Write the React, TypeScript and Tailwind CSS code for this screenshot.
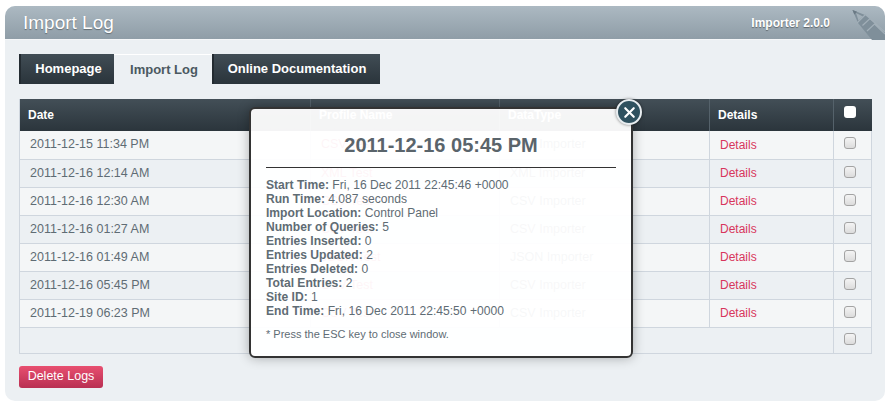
import { X } from "lucide-react";

const rows = [
  { date: "2011-12-15 11:34 PM", profile: "CSV Test", type: "CSV Importer" },
  { date: "2011-12-16 12:14 AM", profile: "XML Test", type: "XML Importer" },
  { date: "2011-12-16 12:30 AM", profile: "CSV Test", type: "CSV Importer" },
  { date: "2011-12-16 01:27 AM", profile: "CSV Test", type: "CSV Importer" },
  { date: "2011-12-16 01:49 AM", profile: "JSON Test", type: "JSON Importer" },
  { date: "2011-12-16 05:45 PM", profile: "CSV Test", type: "CSV Importer" },
  { date: "2011-12-19 06:23 PM", profile: "CSV Test", type: "CSV Importer" },
];

const stats = [
  ["Start Time:", "Fri, 16 Dec 2011 22:45:46 +0000"],
  ["Run Time:", "4.087 seconds"],
  ["Import Location:", "Control Panel"],
  ["Number of Queries:", "5"],
  ["Entries Inserted:", "0"],
  ["Entries Updated:", "2"],
  ["Entries Deleted:", "0"],
  ["Total Entries:", "2"],
  ["Site ID:", "1"],
  ["End Time:", "Fri, 16 Dec 2011 22:45:50 +0000"],
];

function Checkbox({ dark }: { dark?: boolean }) {
  return (
    <span
      className={`ml-[10px] block h-[12px] w-[12px] rounded-[3px] ${
        dark
          ? "-mt-[6px] bg-white"
          : "-mt-[3px] border border-[#a3a3a3] bg-gradient-to-b from-[#f4f4f4] to-[#dcdcdc]"
      }`}
    />
  );
}

function PencilMark() {
  return (
    <svg viewBox="0 0 36 34" className="absolute right-0 top-0 h-[34px] w-[36px]">
      <polygon points="3.5,4 16,9 36,26 36,34 23,34 9,17" fill="#7f8f9a" />
      <polygon points="7,7 14,10.5 9.5,14.5" fill="#a2afb8" />
      <path d="M8 17 L17 8 M13.5 19.5 L21 12.5 L36 26 M18 25 L25.5 18 L36 28" fill="none" stroke="#a2afb8" strokeWidth="1.2" />
      <polygon points="3.5,4 8,5.8 5.3,8.6" fill="#6a7984" />
    </svg>
  );
}

export default function App() {
  const thClass =
    "h-[32px] border-r border-[#55626b] pl-[8px] text-left text-[12px] font-bold text-white";
  const tdClass = "h-[28px] border-b border-r border-[#cfd6de] px-[10px]";

  return (
    <div className="relative h-[413px] w-[896px] overflow-hidden bg-white font-['Liberation_Sans',Arial,sans-serif] text-[12.5px] text-[#5f6c74]">
      <div className="ml-[5px] mt-[6px] h-[395px] w-[880px] overflow-hidden rounded-[10px] bg-[#ecf0f3]">
        <header className="relative flex h-[34px] items-center justify-between border-b border-[#f4f6f8] bg-gradient-to-b from-[#acb9c2] to-[#8f9da7] pl-[18px] pr-[55px]">
          <h1 className="text-[19px] leading-none text-white [text-shadow:0_1px_1px_rgba(0,0,0,0.35)]">
            Import Log
          </h1>
          <span className="text-[12px] font-bold text-white [text-shadow:0_1px_1px_rgba(0,0,0,0.4)]">
            Importer 2.0.0
          </span>
          <PencilMark />
        </header>

        <div className="px-[14px] pt-[14px]">
          <nav className="flex h-[30px] text-[13px] font-bold">
            <a className="flex w-[95px] items-center justify-center border-l-2 border-[#232b31] bg-gradient-to-b from-[#414d55] to-[#2a343b] pl-[2px] text-white">
              Homepage
            </a>
            <a className="flex w-[98px] items-center justify-center border-t border-white pl-[2px] text-[#4b5961]">
              Import Log
            </a>
            <a className="flex w-[168px] items-center justify-center border-l-2 border-[#232b31] bg-gradient-to-b from-[#414d55] to-[#2a343b] text-white">
              Online Documentation
            </a>
          </nav>

          <table className="mt-[15px] w-[852px] table-fixed border-collapse border-l border-[#cfd6de]">
            <colgroup>
              <col className="w-[291px]" />
              <col className="w-[189px]" />
              <col className="w-[210px]" />
              <col className="w-[124px]" />
              <col className="w-[38px]" />
            </colgroup>
            <thead>
              <tr className="bg-gradient-to-b from-[#434f57] to-[#2b353c]">
                <th className={thClass}>Date</th>
                <th className={thClass}>Profile Name</th>
                <th className={thClass}>DataType</th>
                <th className={thClass}>Details</th>
                <th className="h-[32px]">
                  <Checkbox dark />
                </th>
              </tr>
            </thead>
            <tbody>
              {rows.map((row, i) => (
                <tr key={row.date} className={i % 2 === 0 ? "bg-[#f4f6f7]" : "bg-[#ecf0f3]"}>
                  <td className={tdClass}>{row.date}</td>
                  <td className={`${tdClass} text-[#d8355c]`}>{row.profile}</td>
                  <td className={tdClass}>{row.type}</td>
                  <td className={`${tdClass} text-[12px] text-[#d8355c]`}>Details</td>
                  <td className="h-[28px] border-b border-r border-[#cfd6de]">
                    <Checkbox />
                  </td>
                </tr>
              ))}
              <tr>
                <td colSpan={4} className="h-[26px] border-b border-r border-[#cfd6de]" />
                <td className="border-b border-r border-[#cfd6de]">
                  <Checkbox />
                </td>
              </tr>
            </tbody>
          </table>

          <button
            type="button"
            className="mt-[12px] block h-[22px] w-[84px] rounded-[3px] bg-gradient-to-b from-[#e84f70] to-[#b92f52] text-[12.5px] text-white"
          >
            Delete Logs
          </button>
        </div>
      </div>

      <div className="absolute left-[249px] top-[107px] h-[251px] w-[384px] rounded-[6px] border-2 border-[#333] bg-white/[0.95] px-[15px] pt-[23px] shadow-[0_0_12px_rgba(0,0,0,0.3)]">
        <h2 className="h-[36px] border-b border-[#333] text-center text-[20px] font-bold leading-[26px] text-[#5a646b]">
          2011-12-16 05:45 PM
        </h2>
        <div className="mt-[10px] text-[12.1px] leading-[14px] text-[#5f6c74]">
          {stats.map(([label, value]) => (
            <div key={label}>
              <b>{label}</b> {value}
            </div>
          ))}
        </div>
        <p className="mt-[9px] text-[11px] leading-[14px] text-[#5f6c74]">
          * Press the ESC key to close window.
        </p>
      </div>

      <button
        type="button"
        aria-label="Close"
        className="absolute left-[616px] top-[99px] flex h-[26px] w-[26px] items-center justify-center rounded-full border-2 border-[#e8edf0] bg-[#2f515f] text-white shadow-[0_0_3px_rgba(0,0,0,0.5)]"
      >
        <X className="h-[17px] w-[17px]" strokeWidth={3} />
      </button>
    </div>
  );
}
